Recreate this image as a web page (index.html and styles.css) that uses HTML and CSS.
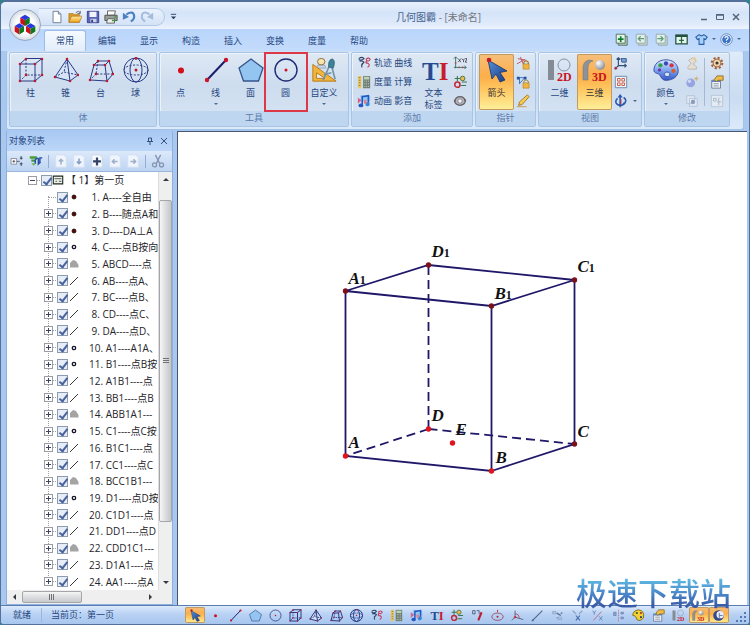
FILE: index.html
```
<!DOCTYPE html>
<html lang="zh-CN">
<head>
<meta charset="utf-8">
<title>几何图霸 - [未命名]</title>
<link rel="stylesheet" href="styles.css">
</head>
<body>
<svg class="defs" aria-hidden="true">
  <defs>
    <linearGradient id="gPalette" x1="0" y1="0" x2="0" y2="1"><stop offset="0" stop-color="#dcecff"/><stop offset=".5" stop-color="#7fa6ee"/><stop offset="1" stop-color="#3456c4"/></linearGradient>
    <radialGradient id="gBall" cx=".35" cy=".3" r=".8"><stop offset="0" stop-color="#fff"/><stop offset="1" stop-color="#7c8288"/></radialGradient>
    <linearGradient id="gArrow" x1="0" y1="0" x2="1" y2="1"><stop offset="0" stop-color="#5b8fd6"/><stop offset="1" stop-color="#123a86"/></linearGradient>
    <linearGradient id="gFold" x1="0" y1="0" x2="0" y2="1"><stop offset="0" stop-color="#ffe9a0"/><stop offset="1" stop-color="#f0a41c"/></linearGradient>
  </defs>
  <symbol id="cube" viewBox="0 0 26 26"><g fill="none" stroke="#283a86"><path d="M2 7H17V24H2ZM8 1.500H24V18M2 7 8 1.500M17 7 24 1.500M17 24 24 18"/><path d="M8 2V18H24M8 18 2 24" stroke-dasharray="2 1.500"/></g><g fill="#b81c34"><circle cx="2" cy="7" r="1.300"/><circle cx="17" cy="7" r="1.300"/><circle cx="17" cy="24" r="1.300"/><circle cx="2" cy="24" r="1.300"/><circle cx="8" cy="2" r="1.300"/><circle cx="24" cy="2" r="1.300"/><circle cx="24" cy="18" r="1.300"/><circle cx="8" cy="18" r="1.300"/></g></symbol>
  <symbol id="pyramid" viewBox="0 0 26 26"><g fill="none" stroke="#283a86"><path d="M14 2 2 20 17 24 25 18ZM14 2 17 24" fill="#d5e3f5"/><path d="M2 20 11 15 25 18M14 2 11 15" stroke-dasharray="2 1.500"/></g><g fill="#b81c34"><circle cx="14" cy="2" r="1.300"/><circle cx="2" cy="20" r="1.300"/><circle cx="17" cy="24" r="1.300"/><circle cx="25" cy="18" r="1.300"/></g></symbol>
  <symbol id="frustum" viewBox="0 0 26 26"><g fill="none" stroke="#283a86"><path d="M6 8H17L21 4H10ZM6 8 2 23 19 24 17 8M19 24 25 17 21 4"/><path d="M10 4 8 17H25M8 17 2 23" stroke-dasharray="2 1.500"/></g><g fill="#b81c34"><circle cx="6" cy="8" r="1.300"/><circle cx="17" cy="8" r="1.300"/><circle cx="21" cy="4" r="1.300"/><circle cx="10" cy="4" r="1.300"/><circle cx="2" cy="23" r="1.300"/><circle cx="19" cy="24" r="1.300"/><circle cx="25" cy="17" r="1.300"/><circle cx="8" cy="17" r="1.300"/></g></symbol>
  <symbol id="sphere" viewBox="0 0 26 26"><g fill="none" stroke="#283a86"><circle cx="13" cy="13" r="12"/><ellipse cx="13" cy="13" rx="6" ry="12"/><ellipse cx="13" cy="13" rx="12" ry="5" stroke-dasharray="2 1.500"/></g><g fill="#b81c34"><circle cx="13" cy="13" r="1.500"/><circle cx="13" cy="1.500" r="1.400"/></g></symbol>
  <symbol id="point" viewBox="0 0 26 26"><circle cx="13" cy="13.500" r="3" fill="#d2101c"/></symbol>
  <symbol id="line" viewBox="0 0 26 26"><path d="M4 23 23 3" stroke="#1c1c6c" stroke-width="2"/><circle cx="4" cy="23" r="2.200" fill="#c8142c"/><circle cx="23" cy="3" r="2.200" fill="#c8142c"/></symbol>
  <symbol id="pentagon" viewBox="0 0 26 26"><path d="M13 2 25 11 20.500 24H5.500L1 11Z" fill="#94c4f0" stroke="#34548e" stroke-width="1.300"/></symbol>
  <symbol id="circle" viewBox="0 0 26 26"><circle cx="13" cy="13" r="11" fill="none" stroke="#202c74" stroke-width="1.400"/><circle cx="13" cy="13" r="1.500" fill="#d2101c"/></symbol>
  <symbol id="custom" viewBox="0 0 28 26"><ellipse cx="11" cy="4" rx="4" ry="3.500" fill="#f7e3b0" stroke="#8a6a2a"/><path d="M7 8h8l1 3H6z" fill="#c8d4e4" stroke="#7a8aa0" stroke-width=".6"/><path d="M2 7V25H27Z" fill="#f2b43c" stroke="#b87812"/><path d="M6 16v6h9z" fill="#e6eef8" stroke="#b87812"/><path d="M20 8 13 24M22 8l4 15M14 18l8-2" stroke="#6f95a8" stroke-width="1.800" fill="none"/><path d="M19 10q-1-8 4-9q4 2 1 10z" fill="#3d8296" stroke="#205666" stroke-width=".6"/></symbol>
  <symbol id="track" viewBox="0 0 16 16"><g fill="none" stroke="#2c4468" stroke-width="1.300"><path d="M2 3q4-3 6 0q-3 3-6 1M3 6q3-1 5 1q-4 4-2 6M5 10l2-2"/></g><g fill="none" stroke="#c0405e" stroke-width="1.300"><path d="M10 4q4-3 5 0q-2 3-4 1q-2 4 1 3q4 2 0 5"/></g></symbol>
  <symbol id="ruler" viewBox="0 0 16 16"><path d="M1 1h4v14H1z" fill="#e8c868"/><path d="M2 3h2M2 6h2M2 9h2M2 12h2" stroke="#8a7034"/><path d="M7 1h8v14H7z" fill="#6f8072"/><path d="M8 2h6v3H8z" fill="#bcd2b8"/><path d="M8.500 7h5M8.500 10h5M8.500 13h5" stroke="#dce4dc" stroke-dasharray="1 1"/></symbol>
  <symbol id="media" viewBox="0 0 16 16"><path d="M4 1 15 2V8L4 9z" fill="#8cc4f4"/><path d="M6 12V3L13 2V11" fill="none" stroke="#2458c0" stroke-width="1.800"/><ellipse cx="4.500" cy="13" rx="2.800" ry="2.200" fill="#2458c0"/><circle cx="12" cy="11.500" r="2.500" fill="#2e8ae0"/><path d="M1 4l4 3-4 4z" fill="#d8608c"/><path d="M8 7h3v4H8z" fill="#e87c84"/></symbol>
  <symbol id="axes" viewBox="0 0 16 16"><path d="M3 1v13M1 13h14M1 3l2-2 2 2M13 11l2 2-2 2" fill="none" stroke="#326858"/><path d="M2 8h2M7 12v2M11 12v2" stroke="#c03434"/><path d="M6 3l3 4M9 3 6 7M10 3l2 2 1-2M12 5v2M14 3h2l-2 4h2" fill="none" stroke="#34343c" stroke-width=".9"/></symbol>
  <symbol id="gears" viewBox="0 0 16 16"><circle cx="5" cy="11" r="3" fill="none" stroke="#c42838" stroke-width="1.800"/><path d="M5 1v6M2 4h6M10 8h6M9 12h6" stroke="#3c7850" stroke-width="1.300"/><circle cx="11" cy="4" r="2.600" fill="#e6bc54" stroke="#4c6838"/></symbol>
  <symbol id="ring" viewBox="0 0 16 16"><ellipse cx="8" cy="8" rx="6" ry="5" fill="#b4b4bc" stroke="#606068" stroke-width="1.500"/><circle cx="8" cy="8" r="2.500" fill="#f5f5fa" stroke="#8a8088"/><path d="M1 8h2M13 7h2" stroke="#603438"/></symbol>
  <symbol id="arrow" viewBox="0 0 26 26"><path d="M4 3 23 14 16 15.500 21 23 16 25 12 17 8 22Z" fill="url(#gArrow)" stroke="#14356c" stroke-width=".8"/><circle cx="5" cy="3" r="2.300" fill="#c41824"/></symbol>
  <symbol id="lockline" viewBox="0 0 16 16"><path d="M2 3l10 2M5 1 9 11M1 9l9-5" stroke="#c04858" fill="none"/><path d="M9 9V7q2.500-3 5 0v2" fill="none" stroke="#a07824" stroke-width="1.300"/><path d="M8 9h7v6H8z" fill="#f2b43c" stroke="#a07824" stroke-width=".6"/></symbol>
  <symbol id="lockpt" viewBox="0 0 16 16"><path d="M2 3h8L4 10V3" fill="none" stroke="#3468b8"/><path d="M1 2h3v3H1zM9 2h3v3H9z" fill="#2450a0"/><path d="M9 9V7q2.500-3 5 0v2" fill="none" stroke="#a07824"/><path d="M8 9h7v6H8z" fill="#f2b43c" stroke="#a07824" stroke-width=".6"/></symbol>
  <symbol id="pencil" viewBox="0 0 16 16"><path d="M3 13 4 9 13 1 15 3 7 12Z" fill="#f7cc50" stroke="#a4701c"/><path d="M1 14.500H12" stroke="#c8963c"/></symbol>
  <symbol id="two" viewBox="0 0 26 26"><path d="M1 3h6v20H1z" fill="#858b94"/><circle cx="17" cy="8" r="6" fill="none" stroke="#858fa0"/></symbol>
  <symbol id="three" viewBox="0 0 26 26"><path d="M1 23V10Q2 3 8 3l3 1Q6 5 6 11V23Z" fill="#8c9298" stroke="#6c7278" stroke-width=".5"/><circle cx="18" cy="8" r="5" fill="url(#gBall)"/></symbol>
  <symbol id="coords" viewBox="0 0 16 16"><path d="M5 12V2M3 4l2-2 2 2M5 11h9M12 9l2 2-2 2M5 11l-4 4" fill="none" stroke="#304c78" stroke-width="1.300"/><path d="M8 3h6v4H9z" fill="#78a4e0" stroke="#304c78"/><circle cx="2" cy="14" r="1.600" fill="#a43850"/></symbol>
  <symbol id="grid" viewBox="0 0 16 16"><path d="M1.500 1.500h13v13h-13z" fill="#eef3fa" stroke="#6482a8"/><path d="M4 4h3v3H4zM9 9h3v3H9zM4 9h3v3H4zM9 4h3v3H9z" fill="none" stroke="#c85034"/></symbol>
  <symbol id="rotate" viewBox="0 0 16 16"><path d="M7 15V3M4 5q-4 4 0 7q5 3 8-2M11 4q5 3 0 8" fill="none" stroke="#2c58ac" stroke-width="1.800"/><path d="M4 4 7 0l3 4z" fill="#2c58ac"/><path d="M8 6v6" stroke="#c42838"/></symbol>
  <symbol id="palette" viewBox="0 0 28 26"><path d="M14 2C6 2 1 7 1 13c0 4 4 3 6 5 2 3 3 7 9 6 8-1 12-6 11-12C26 6 21 2 14 2ZM13 16a3 2.500 0 1 1 1 4 3 2.500 0 0 1-1-4Z" fill="url(#gPalette)" stroke="#3650a8" fill-rule="evenodd"/><circle cx="8" cy="8" r="2.300" fill="#38a044"/><circle cx="14" cy="6" r="2.300" fill="#3848bc"/><circle cx="20" cy="8" r="2.300" fill="#d43448"/><circle cx="22" cy="14" r="2.300" fill="#dc5c28"/><circle cx="7" cy="13" r="1.800" fill="#7038b0"/></symbol>
  <symbol id="person" viewBox="0 0 16 16"><path d="M3 13 7 8 4 5l5-3 4 4-4 3 4 3v3H4z" fill="#e8dcc8" stroke="#b0a8a0"/><circle cx="11" cy="3" r="2" fill="#f0c880"/></symbol>
  <symbol id="orb2" viewBox="0 0 16 16"><circle cx="6.500" cy="9" r="5" fill="#8898dc"/><circle cx="5" cy="7" r="2" fill="#ccd4f8"/><path d="m13 1 1 2 2 1-2 1-1 2-1-2-2-1 2-1z" fill="#d0a868"/></symbol>
  <symbol id="copy" viewBox="0 0 16 16"><path d="M2 2h9v9H2zM5 5h9v9H5z" fill="#e8eef8" stroke="#a8b8d0"/><circle cx="9" cy="9" r="2.300" fill="#7888ac"/></symbol>
  <symbol id="gear" viewBox="0 0 16 16"><circle cx="8" cy="8" r="6" fill="none" stroke="#a0623c" stroke-width="2.400" stroke-dasharray="2.400 2.300"/><circle cx="8" cy="8" r="4.500" fill="#f0d8a8" stroke="#9c5c3c"/><circle cx="8" cy="8" r="1.800" fill="#3c3438"/></symbol>
  <symbol id="props" viewBox="0 0 16 16"><path d="M2 6h10v9H2z" fill="#f4f6fb" stroke="#687890"/><path d="M2 6h10v2H2z" fill="#5884c0"/><path d="M4 10h6M4 12.500h6" stroke="#788898"/><path d="M5 5 8 1h7v5H9L7 8z" fill="#eebc48" stroke="#8c6c2c"/></symbol>
  <symbol id="greyed" viewBox="0 0 16 16"><path d="M1.500 1.500h13v13h-13z" fill="#e2eaf4" stroke="#b4c2d4"/><path d="M4 5h3v3H4zM8 9h5M10 4v9" stroke="#a8b4c4" fill="none"/></symbol>
  <symbol id="doc" viewBox="0 0 16 16"><path d="M3.500 1.500h6l3 3v10h-9z" fill="#fff" stroke="#64748c"/><path d="M9.500 1.500v3h3" fill="#d8e2f0" stroke="#64748c"/></symbol>
  <symbol id="open" viewBox="0 0 16 16"><path d="M1 4h5l1 1h6v9H1z" fill="#dc9c24" stroke="#a87018" stroke-width=".7"/><path d="M4 7h12l-3 7H1z" fill="url(#gFold)" stroke="#a87018" stroke-width=".7"/><path d="M9 3q3-3 5 0M14 1v3h-3" fill="none" stroke="#58606c"/></symbol>
  <symbol id="save" viewBox="0 0 16 16"><path d="M1.500 1.500h13v13h-13z" fill="#5864b4" stroke="#343c88"/><path d="M4 2h8v6H4z" fill="#f1f4ff"/><path d="M5 10h7v4H5z" fill="#c8d0e8"/><path d="M6 11h2v3H6z" fill="#343c88"/></symbol>
  <symbol id="print" viewBox="0 0 16 16"><path d="M4 1h9l-1 5H4z" fill="#fff" stroke="#585858"/><path d="M1 6h14v6H1z" fill="#9ca09c" stroke="#484c48"/><path d="M4 10h8v5H3z" fill="#f0f2ee" stroke="#585858"/><path d="M12 8h2M9 12h4" stroke="#3c9c3c" stroke-width="1.500"/></symbol>
  <symbol id="undo" viewBox="0 0 16 16"><path d="M5 5q8-5 9 2 0 4-4 6" fill="none" stroke="#4c80c4" stroke-width="2.400"/><path d="M1 3v8l7-3z" fill="#4c80c4"/></symbol>
  <symbol id="redo" viewBox="0 0 16 16"><path d="M11 5q-8-5-9 2 0 4 4 6" fill="none" stroke="#a4bcdc" stroke-width="2.200"/><path d="M15 3v8l-7-3z" fill="#a4bcdc"/></symbol>
  <symbol id="pageadd" viewBox="0 0 16 16"><path d="M4 4h11v11H4z" fill="#b8ccc0" stroke="#446450"/><path d="M1.500 1.500h11v11h-11z" fill="#e4f4e8" stroke="#446450"/><path d="M7 4v7M3.500 7.500h7" stroke="#087c28" stroke-width="2"/></symbol>
  <symbol id="pageleft" viewBox="0 0 16 16"><path d="M4 4h11v11H4z" fill="#c4d6d4" stroke="#8ca49c"/><path d="M1.500 1.500h11v11h-11z" fill="#e2efee" stroke="#8ca49c"/><path d="M11 7H5M7 4 4 7l3 3" fill="none" stroke="#5c9c74" stroke-width="1.500"/></symbol>
  <symbol id="pageright" viewBox="0 0 16 16"><path d="M4 4h11v11H4z" fill="#c4d6d4" stroke="#8ca49c"/><path d="M1.500 1.500h11v11h-11z" fill="#e2efee" stroke="#8ca49c"/><path d="M3 7h6M7 4l3 3-3 3" fill="none" stroke="#5c9c74" stroke-width="1.500"/></symbol>
  <symbol id="window" viewBox="0 0 16 16"><path d="M1 2.500h14v11H1z" fill="#e8f4ee" stroke="#245040" stroke-width="1.500"/><path d="M1 2h14v3H1z" fill="#245040"/><path d="M8 5v8M5 9h6" stroke="#246c44" stroke-width="1.500"/></symbol>
  <symbol id="shirt" viewBox="0 0 16 16"><path d="M5 2 1 5l2 3 2-1v7h6V7l2 1 2-3-4-3q-3 3-6 0z" fill="#a8d0f8" stroke="#2860a8" stroke-width="1.300"/></symbol>
  <symbol id="help" viewBox="0 0 16 16"><circle cx="8" cy="8" r="7" fill="#fff" stroke="#4870b0"/><circle cx="8" cy="8" r="5.300" fill="#3874c8"/><path d="M6 6.500q0-2 2-2t2 1.700q0 1.300-2 2.300v1M8 11v1.200" fill="none" stroke="#fff" stroke-width="1.400"/></symbol>
  <symbol id="expandall" viewBox="0 0 20 16"><path d="M1.500 4.500h8v8h-8z" fill="#fff" stroke="#686c78"/><path d="M3.500 8.500h4M5.500 6.500v4M10 8.500h4" stroke="#282c38" fill="none"/><path d="M16 1v5M16 10v5M14 4h4M14 12h4" stroke="#343c50" stroke-width="1.300"/></symbol>
  <symbol id="refresh" viewBox="0 0 18 16"><path d="M1 2h9v3H1zM3 6h5v3H3z" fill="#489c34"/><path d="M8 12V7q2-4 4-2v7l3-3M17 4h-3v7" fill="none" stroke="#204ca4" stroke-width="1.800"/><path d="M3 11l3 3 3-3" fill="#68b444"/></symbol>
  <symbol id="pup" viewBox="0 0 16 16"><path d="M2 1h9l3 3v11H2z" fill="#f0f5fd" stroke="#d2dff0"/><path d="M8 6v6M5.500 8.500l2.500-2.500 2.500 2.500" fill="none" stroke="#a0b0c8" stroke-width="1.800"/></symbol>
  <symbol id="pdown" viewBox="0 0 16 16"><path d="M2 1h9l3 3v11H2z" fill="#f0f5fd" stroke="#d2dff0"/><path d="M8 5v6M5.500 8.500 8 11l2.500-2.500" fill="none" stroke="#88a0c4" stroke-width="1.800"/></symbol>
  <symbol id="pplus" viewBox="0 0 16 16"><path d="M2 1h9l3 3v11H2z" fill="#f8fafe" stroke="#c8d6ea"/><path d="M8 4v9M3.500 8.500h9" stroke="#344468" stroke-width="2.500"/></symbol>
  <symbol id="pl" viewBox="0 0 16 16"><path d="M2 1h9l3 3v11H2z" fill="#f0f5fd" stroke="#d2dff0"/><path d="M11 8.500H5M7.500 6 5 8.500 7.500 11" fill="none" stroke="#a0b0c8" stroke-width="1.800"/></symbol>
  <symbol id="pr" viewBox="0 0 16 16"><path d="M2 1h9l3 3v11H2z" fill="#f0f5fd" stroke="#d2dff0"/><path d="M5 8.500h6M8.500 6 11 8.500 8.500 11" fill="none" stroke="#a0b0c8" stroke-width="1.800"/></symbol>
  <symbol id="cut" viewBox="0 0 16 16"><path d="M5 1l5 10M11 1 6 11" stroke="#8494b0" stroke-width="1.500"/><circle cx="4" cy="12.500" r="2.300" fill="none" stroke="#8494b0" stroke-width="1.500"/><circle cx="12" cy="12.500" r="2.300" fill="none" stroke="#8494b0" stroke-width="1.500"/></symbol>
  <symbol id="dotred" viewBox="0 0 12 12"><circle cx="6" cy="6" r="2" fill="#54080c" stroke="#200808" stroke-width=".8"/></symbol>
  <symbol id="dotring" viewBox="0 0 12 12"><circle cx="6" cy="6" r="1.700" fill="#fff" stroke="#141428" stroke-width="1.300"/></symbol>
  <symbol id="face" viewBox="0 0 12 12"><path d="M2 9.500V5l3-3 3 1 2.500 4v2.500z" fill="#a4a4a4"/></symbol>
  <symbol id="seg" viewBox="0 0 12 12"><path d="M2 10 10 2" stroke="#383838"/></symbol>
  <symbol id="page" viewBox="0 0 14 12"><path d="M1.500 1.500h11v9h-11z" fill="#eef2ea" stroke="#202820" stroke-width="1.300"/><path d="M3 4.500h8M4 7.500h2M8 7.500h3" stroke="#38463c"/></symbol>
  <symbol id="measure" viewBox="0 0 16 16"><path d="M2 2h3v4H2zM7 2h3M10 2v4" fill="none" stroke="#48506c"/><path d="M13 4 9 14" stroke="#bc1c2c" stroke-width="2.500"/></symbol>
  <symbol id="ellipse" viewBox="0 0 16 16"><ellipse cx="8" cy="9.500" rx="7" ry="4.500" fill="none" stroke="#9c3c50"/><path d="M8 1v3" stroke="#bc1c2c"/><circle cx="8" cy="9.500" r="1.200" fill="#bc1c2c"/></symbol>
  <symbol id="angle" viewBox="0 0 16 16"><path d="M5 2v8l10 3M5 10l-4 4" fill="none" stroke="#48546c"/><path d="M5 6q5 0 5 5" fill="none" stroke="#c03848"/><circle cx="5" cy="10" r="1.500" fill="#c03848"/></symbol>
  <symbol id="diag" viewBox="0 0 16 16"><path d="M2 14 14 2" stroke="#526484" stroke-width="1.400"/><circle cx="2" cy="14" r="1.200" fill="#526484"/></symbol>
  <symbol id="translate" viewBox="0 0 16 16"><path d="M2 3h4v3H2zM9 10h4v3H9z" fill="#b4c4e4" stroke="#94a4c4"/><path d="M7 5l5 3M7 11h1M12 5h2" stroke="#52648c" stroke-width="1.500"/></symbol>
  <symbol id="scale" viewBox="0 0 16 16"><path d="M2 2l4 4M14 2l-4 4" stroke="#8c9cb8" stroke-width="1.500"/><path d="M6 8l5 6M11 8l-5 6" stroke="#4468a8" stroke-width="1.300"/></symbol>
  <symbol id="ratio" viewBox="0 0 16 16"><path d="M3 14 13 3" stroke="#c05c68"/><path d="M2 2l2 3 2-3M4 5v2M10 9l4 5M14 9l-4 5" fill="none" stroke="#647cac"/></symbol>
  <symbol id="mirror" viewBox="0 0 16 16"><path d="M8 1v14" stroke="#c47080" stroke-dasharray="2 1"/><path d="M2 4h3v4H2zM11 4h3v2h-3zM11 10h3v2h-3z" fill="#8ca4cc" stroke="#7088b4"/></symbol>
  <symbol id="tinypal" viewBox="0 0 16 16"><path d="M8 1Q1 2 1 8q4 0 5 5 4 3 8-2 2-9-6-10z" fill="#f4d034" stroke="#6c5c14"/><circle cx="6" cy="5" r="1.300" fill="#2c6030"/><circle cx="11" cy="5" r="1.300" fill="#a83428"/><circle cx="11" cy="10" r="1.300" fill="#304070"/></symbol>
  <symbol id="moon" viewBox="0 0 16 16"><circle cx="8" cy="8" r="6.500" fill="#34488c"/><circle cx="10" cy="7" r="4.500" fill="#e8ecf8"/><path d="M9 5v6M9 8h4" stroke="#5868a0"/></symbol>
</svg>

<div class="app">
  <header class="titlebar">
    <button class="orb" aria-label="菜单"><svg viewBox="0 0 32 32"><path d="M16 5l5 3-5 3-5-3z" fill="#2838e0"/><path d="M11 8l5 3v6l-5-3z" fill="#cc101c"/><path d="M21 8l-5 3v6l5-3z" fill="#087c1c"/><path d="M10 14l5 3-5 3-5-3z" fill="#2838e0"/><path d="M5 17l5 3v6l-5-3z" fill="#cc101c"/><path d="M15 17l-5 3v6l5-3z" fill="#087c1c"/><path d="M22 14l5 3-5 3-5-3z" fill="#2838e0"/><path d="M17 17l5 3v6l-5-3z" fill="#cc101c"/><path d="M27 17l-5 3v6l5-3z" fill="#087c1c"/></svg></button>
    <div class="quick">
      <button aria-label="新建"><svg><use href="#doc"/></svg></button>
      <button aria-label="打开"><svg><use href="#open"/></svg></button>
      <button aria-label="保存"><svg><use href="#save"/></svg></button>
      <button aria-label="打印"><svg><use href="#print"/></svg></button>
      <button aria-label="撤销"><svg><use href="#undo"/></svg></button>
      <button aria-label="重做"><svg><use href="#redo"/></svg></button>
    </div>
    <button class="qmore" aria-label="自定义快速访问"><svg viewBox="0 0 8 8"><path d="M1 1.500h6" stroke="#2c3c5c"/><path d="M1 4h6L4 7z" fill="#2c3c5c"/></svg></button>
    <h1>几何图霸 <span>- [未命名]</span></h1>
    <div class="winbtns">
      <button aria-label="最小化"><svg viewBox="0 0 8 8"><path d="M1 6.500h6" stroke="#54647c" stroke-width="1.500"/></svg></button>
      <button aria-label="最大化"><svg viewBox="0 0 8 8"><path d="M.5 1.500h7v5h-7z" fill="none" stroke="#54647c"/><path d="M0 2h8" stroke="#54647c" stroke-width="1.500"/></svg></button>
      <button aria-label="关闭"><svg viewBox="0 0 8 8"><path d="M1 1l6 6M7 1 1 7" stroke="#54647c" stroke-width="1.500"/></svg></button>
    </div>
  </header>

  <nav class="tabs">
    <button class="tab active">常用</button><button class="tab">编辑</button><button class="tab">显示</button><button class="tab">构造</button><button class="tab">插入</button><button class="tab">变换</button><button class="tab">度量</button><button class="tab">帮助</button>
    <div class="tabtools">
      <button aria-label="添加页"><svg><use href="#pageadd"/></svg></button>
      <button aria-label="上一页"><svg><use href="#pageleft"/></svg></button>
      <button aria-label="下一页"><svg><use href="#pageright"/></svg></button>
      <button aria-label="窗口"><svg><use href="#window"/></svg></button>
      <button aria-label="皮肤"><svg><use href="#shirt"/></svg></button><i class="caret"></i>
      <button aria-label="关于"><svg><use href="#help"/></svg></button><i class="caret"></i>
    </div>
  </nav>

  <section class="ribbon">
    <div class="group"><div class="gbody">
      <button class="big"><svg><use href="#cube"/></svg>柱</button>
      <button class="big"><svg><use href="#pyramid"/></svg>锥</button>
      <button class="big"><svg><use href="#frustum"/></svg>台</button>
      <button class="big"><svg><use href="#sphere"/></svg>球</button>
    </div><h2>体</h2></div>
    <div class="group"><div class="gbody">
      <button class="big"><svg><use href="#point"/></svg>点</button>
      <button class="big"><svg><use href="#line"/></svg>线<i class="caret"></i></button>
      <button class="big"><svg><use href="#pentagon"/></svg>面</button>
      <button class="big marked"><svg><use href="#circle"/></svg>圆</button>
      <button class="big wide"><svg><use href="#custom"/></svg>自定义<i class="caret"></i></button>
    </div><h2>工具</h2></div>
    <div class="group"><div class="gbody">
      <div class="rows">
        <button><svg><use href="#track"/></svg>轨迹 曲线</button>
        <button><svg><use href="#ruler"/></svg>度量 计算</button>
        <button><svg><use href="#media"/></svg>动画 影音</button>
      </div>
      <button class="big"><svg class="letters" viewBox="0 0 26 26"><text x="1" y="23">T<tspan fill="#c81e2c">I</tspan></text></svg><span>文本<br>标签</span></button>
      <div class="col">
        <button aria-label="坐标系"><svg><use href="#axes"/></svg></button>
        <button aria-label="参数"><svg><use href="#gears"/></svg></button>
        <button aria-label="圆环"><svg><use href="#ring"/></svg></button>
      </div>
    </div><h2>添加</h2></div>
    <div class="group"><div class="gbody">
      <button class="big on"><svg><use href="#arrow"/></svg>箭头</button>
      <div class="col">
        <button aria-label="锁定直线"><svg><use href="#lockline"/></svg></button>
        <button aria-label="锁定点"><svg><use href="#lockpt"/></svg></button>
        <button aria-label="画笔"><svg><use href="#pencil"/></svg></button>
      </div>
    </div><h2>指针</h2></div>
    <div class="group"><div class="gbody">
      <button class="big"><svg class="dim3" viewBox="0 0 26 26"><use href="#two"/><text x="10" y="24">2D</text></svg>二维</button>
      <button class="big on"><svg class="dim3" viewBox="0 0 26 26"><use href="#three"/><text x="10" y="24">3D</text></svg>三维</button>
      <div class="col more">
        <button aria-label="坐标"><svg><use href="#coords"/></svg></button>
        <button aria-label="网格"><svg><use href="#grid"/></svg></button>
        <button aria-label="旋转"><svg><use href="#rotate"/></svg><i class="caret"></i></button>
      </div>
    </div><h2>视图</h2></div>
    <div class="group"><div class="gbody">
      <button class="big"><svg><use href="#palette"/></svg>颜色<i class="caret"></i></button>
      <div class="col dim">
        <button aria-label="样式"><svg><use href="#person"/></svg></button>
        <button aria-label="渲染"><svg><use href="#orb2"/></svg></button>
        <button aria-label="复制格式"><svg><use href="#copy"/></svg></button>
      </div>
      <hr class="vsep">
      <div class="col">
        <button aria-label="设置"><svg><use href="#gear"/></svg></button>
        <button aria-label="属性"><svg><use href="#props"/></svg></button>
        <button aria-label="对齐"><svg><use href="#greyed"/></svg></button>
      </div>
    </div><h2>修改</h2></div>
  </section>

  <main>
    <aside class="panel">
      <header><h3>对象列表</h3>
        <button aria-label="固定"><svg viewBox="0 0 8 8"><path d="M2.500 1h3v3.500h-3zM1 4.500h6M4 4.500V8" fill="none" stroke="#34507c"/></svg></button>
        <button aria-label="关闭"><svg viewBox="0 0 8 8"><path d="M1 1l6 6M7 1 1 7" stroke="#34507c"/></svg></button>
      </header>
      <div class="ptools">
        <button aria-label="展开"><svg><use href="#expandall"/></svg></button>
        <button aria-label="刷新"><svg><use href="#refresh"/></svg></button>
        <i class="bar"></i>
        <button aria-label="上移"><svg><use href="#pup"/></svg></button>
        <button aria-label="下移"><svg><use href="#pdown"/></svg></button>
        <button aria-label="添加"><svg><use href="#pplus"/></svg></button>
        <button aria-label="左移"><svg><use href="#pl"/></svg></button>
        <button aria-label="右移"><svg><use href="#pr"/></svg></button>
        <i class="bar"></i>
        <button aria-label="剪切"><svg><use href="#cut"/></svg></button>
      </div>
      <div class="treebox">
        <ul class="tree">
          <li class="root"><i class="exp minus"></i><label><input type="checkbox" checked><svg class="pg"><use href="#page"/></svg><span>【 1】第一页</span></label></li>
          <li><i class="exp none"></i><label><input type="checkbox" checked><svg><use href="#dotred"/></svg><span>&nbsp;1. A----全自由</span></label></li>
          <li><i class="exp"></i><label><input type="checkbox" checked><svg><use href="#dotred"/></svg><span>&nbsp;2. B----随点A和</span></label></li>
          <li><i class="exp"></i><label><input type="checkbox" checked><svg><use href="#dotred"/></svg><span>&nbsp;3. D----DA⊥A</span></label></li>
          <li><i class="exp"></i><label><input type="checkbox" checked><svg><use href="#dotring"/></svg><span>&nbsp;4. C----点B按向</span></label></li>
          <li><i class="exp"></i><label><input type="checkbox" checked><svg><use href="#face"/></svg><span>&nbsp;5. ABCD----点</span></label></li>
          <li><i class="exp"></i><label><input type="checkbox" checked><svg><use href="#seg"/></svg><span>&nbsp;6. AB----点A、</span></label></li>
          <li><i class="exp"></i><label><input type="checkbox" checked><svg><use href="#seg"/></svg><span>&nbsp;7. BC----点B、</span></label></li>
          <li><i class="exp"></i><label><input type="checkbox" checked><svg><use href="#seg"/></svg><span>&nbsp;8. CD----点C、</span></label></li>
          <li><i class="exp"></i><label><input type="checkbox" checked><svg><use href="#seg"/></svg><span>&nbsp;9. DA----点D、</span></label></li>
          <li><i class="exp"></i><label><input type="checkbox" checked><svg><use href="#dotring"/></svg><span>10. A1----A1A、</span></label></li>
          <li><i class="exp"></i><label><input type="checkbox" checked><svg><use href="#dotring"/></svg><span>11. B1----点B按</span></label></li>
          <li><i class="exp"></i><label><input type="checkbox" checked><svg><use href="#seg"/></svg><span>12. A1B1----点</span></label></li>
          <li><i class="exp"></i><label><input type="checkbox" checked><svg><use href="#seg"/></svg><span>13. BB1----点B</span></label></li>
          <li><i class="exp"></i><label><input type="checkbox" checked><svg><use href="#face"/></svg><span>14. ABB1A1---</span></label></li>
          <li><i class="exp"></i><label><input type="checkbox" checked><svg><use href="#dotring"/></svg><span>15. C1----点C按</span></label></li>
          <li><i class="exp"></i><label><input type="checkbox" checked><svg><use href="#seg"/></svg><span>16. B1C1----点</span></label></li>
          <li><i class="exp"></i><label><input type="checkbox" checked><svg><use href="#seg"/></svg><span>17. CC1----点C</span></label></li>
          <li><i class="exp"></i><label><input type="checkbox" checked><svg><use href="#face"/></svg><span>18. BCC1B1---</span></label></li>
          <li><i class="exp"></i><label><input type="checkbox" checked><svg><use href="#dotring"/></svg><span>19. D1----点D按</span></label></li>
          <li><i class="exp"></i><label><input type="checkbox" checked><svg><use href="#seg"/></svg><span>20. C1D1----点</span></label></li>
          <li><i class="exp"></i><label><input type="checkbox" checked><svg><use href="#seg"/></svg><span>21. DD1----点D</span></label></li>
          <li><i class="exp"></i><label><input type="checkbox" checked><svg><use href="#face"/></svg><span>22. CDD1C1---</span></label></li>
          <li><i class="exp"></i><label><input type="checkbox" checked><svg><use href="#seg"/></svg><span>23. D1A1----点</span></label></li>
          <li><i class="exp"></i><label><input type="checkbox" checked><svg><use href="#seg"/></svg><span>24. AA1----点A</span></label></li>
        </ul>
        <div class="vscroll"><button aria-label="向上滚动"><i class="tri up"></i></button><div class="thumb"></div><span class="space"></span><button aria-label="向下滚动"><i class="tri down"></i></button></div>
      </div>
      <div class="hscroll"><button aria-label="向左滚动"><i class="tri left"></i></button><div class="thumb"></div><span class="space"></span><button aria-label="向右滚动"><i class="tri right"></i></button><span class="corner"></span></div>
    </aside>

    <section class="canvas">
      <svg viewBox="179 132 568 473" role="img" aria-label="正方体">
        <g fill="none" stroke="#1f1768" stroke-width="1.800">
          <path d="M346 291 429 265 575 280 492 306ZM346 291V456L492 471V306M492 471 575 444V280"/>
          <path d="M429 429V265M429 429 346 456M429 429 575 444" stroke-dasharray="9 5"/>
        </g>
        <g fill="#7c1018"><circle cx="346" cy="291" r="2.700"/><circle cx="429" cy="265" r="2.700"/><circle cx="575" cy="280" r="2.700"/><circle cx="492" cy="306" r="2.700"/><circle cx="575" cy="444" r="2.700"/></g>
        <g fill="#e0141c"><circle cx="346" cy="456" r="2.700"/><circle cx="429" cy="429" r="2.700"/><circle cx="492" cy="471" r="2.700"/><circle cx="453" cy="443" r="2.700"/></g>
        <g class="names">
          <text x="349" y="284">A<tspan>1</tspan></text><text x="432" y="257">D<tspan>1</tspan></text>
          <text x="578" y="272">C<tspan>1</tspan></text><text x="495" y="299">B<tspan>1</tspan></text>
          <text x="349" y="448">A</text><text x="432" y="421">D</text><text x="456" y="435">E</text><text x="578" y="437">C</text><text x="496" y="463">B</text>
        </g>
      </svg>
    </section>
  </main>

  <footer class="status">
    <div class="state"><span>就绪</span><span>当前页：第一页</span></div>
    <div class="sbar">
      <button class="on" aria-label="箭头"><svg><use href="#arrow"/></svg></button>
      <button aria-label="点"><svg><use href="#point"/></svg></button>
      <button aria-label="线"><svg><use href="#line"/></svg></button>
      <button aria-label="面"><svg><use href="#pentagon"/></svg></button>
      <button aria-label="圆"><svg><use href="#circle"/></svg></button>
      <button class="bold" aria-label="柱"><svg><use href="#cube"/></svg></button>
      <button class="bold" aria-label="锥"><svg><use href="#pyramid"/></svg></button>
      <button class="bold" aria-label="台"><svg><use href="#frustum"/></svg></button>
      <button class="bold" aria-label="球"><svg><use href="#sphere"/></svg></button>
      <button aria-label="轨迹"><svg><use href="#track"/></svg></button>
      <button aria-label="度量"><svg><use href="#ruler"/></svg></button>
      <button aria-label="动画"><svg><use href="#media"/></svg></button>
      <button aria-label="文本"><svg class="letters" viewBox="0 0 26 26"><text x="1" y="22">T<tspan fill="#c81e2c">I</tspan></text></svg></button>
      <button aria-label="参数"><svg><use href="#gears"/></svg></button>
      <button aria-label="测量"><svg><use href="#measure"/></svg></button>
      <button aria-label="椭圆"><svg><use href="#ellipse"/></svg></button>
      <button aria-label="角"><svg><use href="#angle"/></svg></button>
      <button aria-label="直线"><svg><use href="#diag"/></svg></button>
      <button aria-label="平移"><svg><use href="#translate"/></svg></button>
      <button aria-label="缩放"><svg><use href="#scale"/></svg></button>
      <button aria-label="比例"><svg><use href="#ratio"/></svg></button>
      <button aria-label="镜像"><svg><use href="#mirror"/></svg></button>
      <button aria-label="颜色"><svg><use href="#tinypal"/></svg></button>
      <button aria-label="属性"><svg><use href="#props"/></svg></button>
      <button aria-label="二维"><svg class="dim3" viewBox="0 0 26 26"><use href="#two"/><text x="10" y="24">2D</text></svg></button>
      <button class="on" aria-label="三维"><svg class="dim3" viewBox="0 0 26 26"><use href="#three"/><text x="10" y="24">3D</text></svg></button>
      <button class="on" aria-label="夜间"><svg><use href="#moon"/></svg></button>
    </div>
    <svg class="grip" viewBox="0 0 10 10"><g fill="#5478b0"><path d="M8 0h2v2H8zM4 4h2v2H4zM8 4h2v2H8zM0 8h2v2H0zM4 8h2v2H4zM8 8h2v2H8z"/></g></svg>
  </footer>
  <div class="watermark">极速下载站</div>
</div>
</body>
</html>
```
FILE: styles.css
```
* { box-sizing: border-box; }
body {
  margin: 0;
  background: #2b8583;
  font: 9px/14px "Open Sans", "Noto Sans CJK SC", sans-serif;
  color: #26477f;
}
button {
  margin: 0; padding: 0; border: 0; background: none;
  font: inherit; color: inherit;
  display: flex; align-items: center; justify-content: center;
}
h1, h2, h3 { margin: 0; font: inherit; }
i { font-style: normal; }
svg { display: block; flex: none; }
.defs { position: absolute; width: 0; height: 0; }

.app {
  position: relative;
  display: flex; flex-direction: column;
  height: 100vh;
  border: 1px solid #53719b;
  border-top-width: 2px;
  border-radius: 6px 6px 4px 4px;
  background: #a9c8f0;
  overflow: hidden;
}
.caret { width: 0; height: 0; border: 2px solid transparent; border-top-color: #4c6894; border-bottom: 0; }

/* title bar */
.titlebar {
  display: flex; align-items: center;
  height: 27px; padding: 2px 5px 0 38px;
  background: linear-gradient(#e9f1fd, #d5e4f9 40%, #dfeafb 80%, #eef4fd);
}
.orb {
  position: absolute; left: 8px; top: 7px; z-index: 2;
  width: 32px; height: 32px; border-radius: 50%;
  border: 1px solid #9aa8bd;
  background: radial-gradient(#fff 40%, #d9dfe8 70%, #b6c2d2);
}
.orb svg { width: 30px; height: 30px; }
.quick {
  display: flex; gap: 4px;
  height: 18px; padding: 0 10px 0 11px;
  border: 1px solid #b4c9e6; border-left: 0; border-radius: 0 10px 10px 0;
  background: linear-gradient(#eaf2fd, #d4e2f6);
}
.quick button { width: 14px; }
.quick svg { width: 14px; height: 14px; }
.qmore { width: 16px; }
.qmore svg { width: 7px; height: 7px; }
h1 { flex: 1; text-align: center; font-size: 10px; color: #45618e; }
h1 span { color: #74767c; }
.winbtns { display: flex; }
.winbtns button { width: 16px; height: 16px; }
.winbtns svg { width: 8px; height: 8px; }

/* tabs */
.tabs {
  display: flex; align-items: flex-end;
  height: 22px; padding: 0 8px 0 43px;
  background: linear-gradient(#b9d5fb, #c4dcfc);
}
.tab { width: 42px; height: 21px; border: 1px solid transparent; border-bottom: 0; }
.tab.active { border-color: #9cbbe6; border-radius: 3px 3px 0 0; background: linear-gradient(#f6faff, #e2edfa); }
.tabtools { display: flex; align-items: center; gap: 1px; height: 20px; margin-left: auto; align-self: flex-start; }
.tabtools button { width: 19px; height: 18px; }
.tabtools svg { width: 13px; height: 13px; }

/* ribbon */
.ribbon {
  display: flex; gap: 2px;
  margin: 0 5px; padding: 0 2px 2px;
  border: 1px solid #a4c2e8; border-top-color: #cfe0f5; border-radius: 3px;
  background: linear-gradient(#dfebf9, #cadcf1 60%, #dcebfb);
}
.group { border: 1px solid #a9c5e6; border-radius: 2px; background: linear-gradient(#dfe9f5, #cddcee 45%, #d7e5f5); box-shadow: inset 1px 1px #ecf3fb; }
.group h2 { height: 15px; text-align: center; background: #bfd6f0; color: #5a7bab; }
.gbody { display: flex; height: 58px; padding: 1px 3px; }
.big { position: relative; flex-direction: column; justify-content: flex-start; width: 35px; padding-top: 3px; line-height: 12px; }
.big svg { width: 26px; height: 26px; margin-bottom: 4px; }
.big .caret { margin-top: 4px; }
.wide { width: 42px; }
.letters { font: bold 25px "Liberation Serif", serif; fill: #254a94; overflow: visible; }
.dim3 { font: bold 12px "Liberation Serif", serif; fill: #c8141e; overflow: visible; }
.marked::after { content: ""; position: absolute; inset: -2px -5px -2px -4px; border: 2px solid #dd3848; z-index: 1; }
.on { background: linear-gradient(#f6bf7c, #fdae49 40%, #ffc45e 60%, #fff09a); box-shadow: inset 0 0 0 1px #c09a62; border-radius: 2px; }
.big.on { color: #3a3436; }
.rows { display: flex; flex-direction: column; width: 61px; padding-left: 2px; }
.rows button { flex: 1; gap: 3px; justify-content: flex-start; white-space: nowrap; }
.rows svg, .col svg { width: 14px; height: 14px; }
.col { display: flex; flex-direction: column; width: 18px; }
.col button { flex: 1; }
.more { width: 26px; }
.more button { justify-content: flex-start; padding-left: 2px; gap: 5px; }
.dim { opacity: .8; }
.vsep { width: 1px; height: 48px; margin: 4px 3px; border: 0; background: #a3b8d2; }

/* work area */
main { flex: 1; display: flex; min-height: 0; padding: 1px 2px 0 5px; }
.panel { display: flex; flex-direction: column; width: 167px; margin-right: 4px; border: 1px solid #8eb0de; border-top: 0; }
.panel header { display: flex; align-items: center; height: 20px; padding: 0 1px 0 2px; background: linear-gradient(#a9c9f4, #bcd6f8); }
.panel h3 { flex: 1; }
.panel header button { width: 14px; height: 14px; }
.panel header svg { width: 8px; height: 8px; }
.ptools { display: flex; align-items: center; height: 21px; overflow: hidden; background: linear-gradient(#dce9fa, #bdd4f2); border-bottom: 1px solid #9ab6dc; }
.ptools button { width: 18px; height: 18px; flex: none; }
.ptools button:first-child { width: 20px; }
.ptools svg { width: 14px; height: 14px; }
.bar { width: 1px; height: 13px; margin: 0 3px; background: #93aed2; flex: none; }
.treebox { flex: 1; display: flex; min-height: 0; background: #fff; }
.tree {
  position: relative;
  flex: 1; min-width: 0; display: grid; grid-auto-rows: 1fr;
  margin: 0; padding: 0; list-style: none; overflow: hidden;
  font-size: 10px; color: #25252a;
}
.tree::before { content: ""; position: absolute; left: 41px; top: 24px; bottom: 8px; border-left: 1px dotted #a0a0a0; }
.tree li { position: relative; display: flex; align-items: center; min-height: 0; padding-left: 37px; white-space: nowrap; }
.tree li.root { padding-left: 21px; }
.exp { position: relative; width: 9px; height: 9px; border: 1px solid #9c9ca4; background: linear-gradient(#3c4460, #3c4460) center / 5px 1px no-repeat, linear-gradient(#3c4460, #3c4460) center / 1px 5px no-repeat, #fff; flex: none; }
.exp::after { content: ""; position: absolute; left: 8px; top: 3px; width: 5px; border-top: 1px dotted #a0a0a0; }
.exp.minus { background: linear-gradient(#3c4460, #3c4460) center / 5px 1px no-repeat, #fff; }
.exp.none { border-color: transparent; background: none; }
.exp.none::after { left: 4px; width: 9px; }
.tree label { display: flex; align-items: center; }
.tree input { appearance: none; position: relative; width: 11px; height: 11px; margin: 0 0 0 4px; border: 1px solid #8c9cb0; background: #e6edf6; flex: none; }
.tree input:checked::after { content: ""; position: absolute; left: 3px; top: 0; width: 3px; height: 7px; border: solid #4a629c; border-width: 0 2px 2px 0; transform: rotate(38deg); }
.tree label svg { width: 12px; height: 12px; margin-right: 9px; }
.tree label .pg { margin-right: 2px; }
.vscroll { display: flex; flex-direction: column; width: 14px; background: #efeff0; border-left: 1px solid #dcdce0; }
.vscroll button { height: 15px; flex: none; }
.vscroll .thumb { flex: 6; margin-top: 13px; border: 1px solid #a4a6aa; border-radius: 2px; background: linear-gradient(90deg, #f6f6f6, #dcdde0 50%, #c4c6ca); display: flex; align-items: center; justify-content: center; }
.vscroll .space { flex: 1; }
.thumb::before { content: ""; width: 6px; height: 6px; background: repeating-linear-gradient(#707278 0 1px, transparent 1px 2px); }
.hscroll { display: flex; height: 14px; background: #efeff0; }
.hscroll button { width: 15px; }
.hscroll .thumb { width: 60px; margin: 1px 0; border: 1px solid #a4a6aa; border-radius: 2px; background: linear-gradient(#f6f6f6, #dcdde0 50%, #c8cace); display: flex; align-items: center; justify-content: center; }
.hscroll .thumb::before { background: repeating-linear-gradient(90deg, #707278 0 1px, transparent 1px 2px); }
.hscroll .space { flex: 1; }
.corner { width: 14px; }
.tri { width: 0; height: 0; border: 3px solid transparent; }
.up { border-bottom-color: #36383e; border-top: 0; }
.down { border-top-color: #36383e; border-bottom: 0; }
.left { border-right-color: #36383e; border-left: 0; }
.right { border-left-color: #36383e; border-right: 0; }

.canvas { flex: 1; min-width: 0; border: 1px solid #45566f; border-width: 1px 0 0 1px; background: #fff; }
.canvas svg { width: 100%; height: 100%; }
.names { font: italic bold 17px "Liberation Serif", serif; fill: #111; }
.names tspan { font-size: 12px; font-style: normal; }

/* status bar */
.status { display: flex; align-items: center; height: 19px; border-top: 1px solid #5b7daf; background: linear-gradient(#dbe9fb, #b9d2f4 45%, #a8c6ee); }
.state { display: flex; width: 184px; padding-left: 12px; }
.state span { padding-right: 10px; }
.state span + span { padding-left: 9px; border-left: 1px solid #9bb6dc; }
.sbar { flex: 1; display: flex; height: 16px; }
.sbar button { flex: 1; }
.sbar svg { width: 13px; height: 13px; }
.bold svg { stroke-width: 2; }
.grip { width: 10px; height: 10px; margin: 4px 3px 0 7px; }

.watermark {
  position: absolute; right: 18px; bottom: 13px;
  font: 500 31px/38px "Noto Sans CJK SC", sans-serif;
  color: transparent;
  background: linear-gradient(#5fbbe4 15%, #4a86c8 55%, #3a5ca8 85%);
  background-clip: text; -webkit-background-clip: text;
}
```
